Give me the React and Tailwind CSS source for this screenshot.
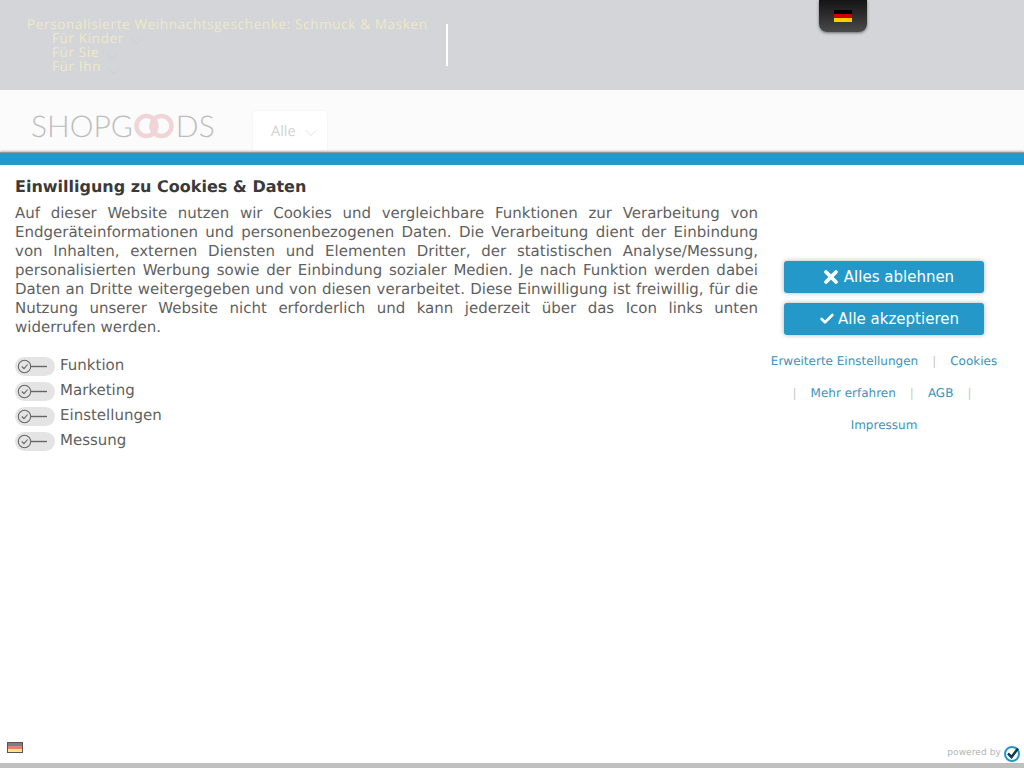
import { Check, X, ChevronDown } from 'lucide-react';

const dejavu = "font-['DejaVu_Sans',sans-serif]";

const categories = ['Funktion', 'Marketing', 'Einstellungen', 'Messung'];

const Flag = ({ className }) => (
    <div className={`flex flex-col ${className}`}>
        <div className="flex-1 bg-black"></div>
        <div className="flex-1 bg-[#d00000]"></div>
        <div className="flex-1 bg-[#ffce00]"></div>
    </div>
);

const Toggle = () => (
    <div className="w-10 h-[19px] rounded-full bg-[#e4e4e4] flex items-center pl-[2px] shrink-0">
        <svg width="32" height="15" viewBox="0 0 32 15" fill="none" stroke="#666" strokeWidth="1.1">
            <circle cx="7.5" cy="7.5" r="6.2" />
            <path d="M4.8 7.5l2.2 2.2 3.6-4.2" />
            <path d="M14 7.5h16" strokeWidth="1.4" />
        </svg>
    </div>
);

const SubLink = ({ label, chevronClass }) => (
    <div className="flex h-[14px] items-center pl-[25px]">
        <span>{label}</span>
        <ChevronDown size={22} strokeWidth={0.8} className={`text-[#cacccf] shrink-0 ${chevronClass}`} />
    </div>
);

const Sep = () => <span className="text-[#c8c8c8]">|</span>;

export default function App() {
    return (
        <div className={`w-[1024px] h-[768px] overflow-hidden flex flex-col bg-white antialiased [text-rendering:geometricPrecision] ${dejavu}`}>
            {/* dimmed shop header behind the consent layer */}
            <div className="h-[90px] shrink-0 bg-[#d3d5d9] flex pl-[27px] pt-[17px] font-['Open_Sans',sans-serif] text-[13.5px] leading-[14px] tracking-[0.64px] text-[#efe9c8]">
                <div className="w-[419px]">
                    <div className="whitespace-nowrap">Personalisierte Weihnachtsgeschenke: Schmuck & Masken</div>
                    <SubLink label="Für Kinder" chevronClass="ml-[2px] mt-[5px]" />
                    <SubLink label="Für Sie" chevronClass="ml-[2px] mt-[7px]" />
                    <SubLink label="Für Ihn" chevronClass="ml-[2px] mt-[9px]" />
                </div>
                <div className="w-[2px] h-[42px] bg-white mt-[7px]"></div>
                <div className="w-[48px] h-[32px] -mt-[17px] ml-[371px] rounded-b-lg bg-gradient-to-b from-[#151515] to-[#4a4a4a] shadow-[0_1px_3px_rgba(0,0,0,0.5)] flex justify-center items-center">
                    <Flag className="w-[18px] h-[13px]" />
                </div>
            </div>

            <div className="h-[62px] shrink-0 bg-[#fbfbfb] flex pl-[31px] pt-[20px]">
                <div className="flex items-center h-[32px] w-[221px] font-['Lato',sans-serif] font-light text-[30px] text-[#bdbdbd]">
                    <span>SHOPG</span>
                    <svg width="40" height="26" viewBox="0 0 40 26" fill="none" stroke="#f0d4d7" strokeWidth="4.5" className="ml-[1px] shrink-0">
                        <circle cx="12.5" cy="13" r="10" />
                        <circle cx="27.5" cy="13" r="10" />
                    </svg>
                    <span className="ml-[2px]">DS</span>
                </div>
                <div className="w-[76px] h-[42px] bg-white border border-[#f6f6f6] rounded-t-sm flex items-center pl-[18px] gap-[5px] font-['Open_Sans',sans-serif] text-[14.5px] text-[#d2d2d2]">
                    <span className="mt-[2px]">Alle</span>
                    <ChevronDown size={20} strokeWidth={0.8} className="mt-[4px]" />
                </div>
            </div>

            {/* consent layer */}
            <div className="h-[13px] shrink-0 bg-[#2499c9] border-t border-[#8f9a9f] shadow-[0_-1px_2px_rgba(0,0,0,0.25)]"></div>
            <div className="flex-1 min-h-0 flex flex-col bg-white">
                <div className="flex pl-[15px] pt-[12px]">
                    <div className="w-[743px] shrink-0">
                        <h1 className="text-[16px] leading-[19px] font-bold text-[#3a3a3a]">Einwilligung zu Cookies & Daten</h1>
                        <p className="mt-[8px] text-[15px] leading-[19px] text-[#5f5f5f] text-justify">
                            Auf dieser Website nutzen wir Cookies und vergleichbare Funktionen zur Verarbeitung von Endgeräteinformationen und personenbezogenen Daten. Die Verarbeitung dient der Einbindung von Inhalten, externen Diensten und Elementen Dritter, der statistischen Analyse/Messung, personalisierten Werbung sowie der Einbindung sozialer Medien. Je nach Funktion werden dabei Daten an Dritte weitergegeben und von diesen verarbeitet. Diese Einwilligung ist freiwillig, für die Nutzung unserer Website nicht erforderlich und kann jederzeit über das Icon links unten widerrufen werden.
                        </p>
                        <div className="mt-[20px] flex flex-col gap-[6px]">
                            {categories.map((name) => (
                                <div key={name} className="flex items-center h-[19px] gap-[5px] text-[15px] text-[#5f5f5f]">
                                    <Toggle />
                                    <span className="-mt-[3px]">{name}</span>
                                </div>
                            ))}
                        </div>
                    </div>

                    <div className="w-[252px] flex flex-col items-center pt-[84px]">
                        <button className="w-[200px] h-[32px] rounded-[3px] bg-[#2499c9] text-white text-[15px] shadow-[0_0_5px_rgba(0,0,0,0.3)] flex items-center justify-center gap-[3px] pl-[7px]">
                            <X size={20} strokeWidth={4.5} />
                            <span>Alles ablehnen</span>
                        </button>
                        <button className="mt-[10px] w-[200px] h-[32px] rounded-[3px] bg-[#2499c9] text-white text-[15px] shadow-[0_0_5px_rgba(0,0,0,0.3)] flex items-center justify-center gap-[3px] pl-[10px]">
                            <Check size={16} strokeWidth={4} />
                            <span>Alle akzeptieren</span>
                        </button>
                        <div className="mt-[10px] w-full text-[12px] leading-[32px] text-[#3a94bb] flex flex-col items-center">
                            <div className="flex gap-[14px] whitespace-nowrap">
                                <span>Erweiterte Einstellungen</span>
                                <Sep />
                                <span>Cookies</span>
                            </div>
                            <div className="flex gap-[14px] whitespace-nowrap pr-[4px]">
                                <Sep />
                                <span>Mehr erfahren</span>
                                <Sep />
                                <span>AGB</span>
                                <Sep />
                            </div>
                            <div>Impressum</div>
                        </div>
                    </div>
                </div>

                <div className="mt-auto h-[22px] flex justify-between pl-[7px] pr-[4px]">
                    <div className="w-[16px] h-[11px] mt-[1px] border border-[#555]">
                        <Flag className="w-full h-full opacity-50" />
                    </div>
                    <div className="flex items-start gap-[3px] text-[9px] leading-[16px] tracking-[0.1px] text-[#b5b5b5]">
                        <span className="mt-[4px]">powered by</span>
                        <svg width="16" height="16" viewBox="0 0 16 16" fill="none" className="mt-[5px]">
                            <circle cx="8" cy="8" r="7" stroke="#2499c9" strokeWidth="2" />
                            <path d="M4 7.5l3.5 3.5L14 2.5" stroke="#12384f" strokeWidth="2.5" />
                        </svg>
                    </div>
                </div>
            </div>
            <div className="h-[5px] shrink-0 bg-[#c0c0c0]"></div>
        </div>
    );
}
